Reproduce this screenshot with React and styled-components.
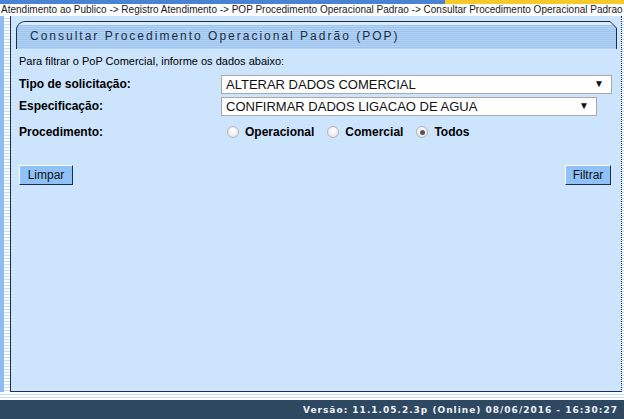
import styled, { createGlobalStyle } from "styled-components";

const Global = createGlobalStyle`
	html, body {
		margin: 0;
		padding: 0;
		background: #ffffff;
	}
	body {
		font-family: "Liberation Sans", Arial, sans-serif;
		color: #000;
	}
`;

const Page = styled.div`
	display: flex;
	flex-direction: column;
	width: 624px;
	height: 419px;
	overflow: hidden;
`;

const TopBar = styled.div`
	display: flex;
	height: 4px;
	flex-shrink: 0;
`;

const TopSegment = styled.div`
	flex: ${(p) => p.$grow};
	background: ${(p) => p.$color};
`;

const Breadcrumb = styled.div`
	height: 12px;
	line-height: 11px;
	font-size: 10px;
	color: #1a1a1a;
	white-space: nowrap;
	overflow: hidden;
	padding-left: 1px;
	flex-shrink: 0;
`;

const Main = styled.div`
	flex: 1;
	display: flex;
	min-height: 0;
`;

const SideBlue = styled.div`
	width: 4px;
	background: #8cbcf0;
`;

const SideStripes = styled.div`
	width: 6px;
	background: repeating-linear-gradient(
		to bottom,
		#ffffff 0px,
		#ffffff 2px,
		#c4dcf4 2px,
		#c4dcf4 3px
	);
	border-right: 1px solid #1e2f44;
`;

const Content = styled.div`
	flex: 1;
	background: #cce4fc;
	border-right: 1px dotted #2a3c55;
	border-bottom: 1px solid #1e2f44;
	padding: 5px 4px 0 5px;
	display: flex;
	flex-direction: column;
`;

const SideRight = styled.div`
	width: 2px;
	background: repeating-linear-gradient(
		to bottom,
		#ffffff 0px,
		#ffffff 2px,
		#c4dcf4 2px,
		#c4dcf4 3px
	);
`;

const TabOuter = styled.div`
	height: 26px;
	background: #1e2f44;
	border-top-left-radius: 9px;
	clip-path: polygon(0 0, calc(100% - 7px) 0, 100% 7px, 100% 100%, 0 100%);
	padding: 1px;
`;

const TabInner = styled.div`
	height: 100%;
	border-top-left-radius: 8px;
	clip-path: polygon(0 0, calc(100% - 6px) 0, 100% 6px, 100% 100%, 0 100%);
	background:
		linear-gradient(to bottom, #dcecfc 0px, #dcecfc 3px, transparent 3px),
		repeating-linear-gradient(
			to bottom,
			#b4d4f6 0px,
			#b4d4f6 1px,
			#9cc4ee 1px,
			#9cc4ee 2px
		);
	display: flex;
	align-items: center;
	padding-left: 13px;
	padding-top: 1px;
	font-size: 12px;
	letter-spacing: 2px;
	color: #1c2c40;
`;

const Form = styled.div`
	padding: 5px 0 0 3px;
	display: flex;
	flex-direction: column;
`;

const Intro = styled.div`
	font-size: 11px;
	height: 14px;
	line-height: 14px;
	margin-bottom: 5px;
`;

const Row = styled.div`
	display: grid;
	grid-template-columns: 202px 1fr;
	align-items: center;
	height: ${(p) => p.$h || 22}px;
	padding-top: ${(p) => p.$pt || 0}px;
`;

const Label = styled.div`
	font-size: 12px;
	font-weight: bold;
`;

const SelectBox = styled.div`
	width: ${(p) => p.$w}px;
	height: 19px;
	box-sizing: border-box;
	background: #ffffff;
	border: 1px solid #a8a8a8;
	display: flex;
	align-items: center;
	justify-content: space-between;
	padding: 0 7px 0 4px;
	font-size: 13px;
	color: #111;
`;

const Arrow = styled.span`
	font-size: 10px;
	line-height: 1;
`;

const Radios = styled.div`
	display: flex;
	align-items: center;
	padding-left: 6px;
`;

const RadioItem = styled.label`
	display: flex;
	align-items: center;
	font-size: 12px;
	font-weight: bold;
	margin-right: 13px;
`;

const RadioDot = styled.span`
	width: 12px;
	height: 12px;
	box-sizing: border-box;
	border-radius: 50%;
	border: 1px solid #b4b4b4;
	background: radial-gradient(circle at 50% 35%, #ffffff 0%, #e2e2e2 100%);
	margin-right: 6px;
	display: flex;
	align-items: center;
	justify-content: center;

	&::after {
		content: "";
		width: 5px;
		height: 5px;
		border-radius: 50%;
		background: ${(p) => (p.$checked ? "#555" : "transparent")};
	}
`;

const Buttons = styled.div`
	display: flex;
	justify-content: space-between;
	margin-top: 19px;
	padding-right: 6px;
`;

const Button = styled.button`
	font-family: "Liberation Sans", Arial, sans-serif;
	font-size: 12px;
	height: 20px;
	padding: 0 5px;
	background: #8ec2f8;
	color: #111;
	border: 1px solid;
	border-color: #ffffff #1e2f44 #1e2f44 #ffffff;
	min-width: ${(p) => p.$w}px;
	cursor: pointer;
`;

const BottomStripes = styled.div`
	height: 8px;
	flex-shrink: 0;
	background: repeating-linear-gradient(
		to bottom,
		#ffffff 0px,
		#ffffff 2px,
		#c4dcf4 2px,
		#c4dcf4 3px
	);
`;

const Footer = styled.div`
	height: 19px;
	flex-shrink: 0;
	background: #2f4862;
	color: #eef2f6;
	font-family: "DejaVu Sans", Verdana, sans-serif;
	font-weight: bold;
	font-size: 9px;
	letter-spacing: 1px;
	display: flex;
	align-items: center;
	justify-content: flex-end;
	padding-right: 6px;
`;

const tipos = ["Operacional", "Comercial", "Todos"];

function App() {
	return (
		<>
			<Global />
			<Page>
				<TopBar>
					<TopSegment $grow={445} $color="#4a82d4" />
					<TopSegment $grow={179} $color="#f6c828" />
				</TopBar>
				<Breadcrumb>
					Atendimento ao Publico -&gt; Registro Atendimento -&gt; POP
					Procedimento Operacional Padrao -&gt; Consultar Procedimento
					Operacional Padrao
				</Breadcrumb>
				<Main>
					<SideBlue />
					<SideStripes />
					<Content>
						<TabOuter>
							<TabInner>Consultar Procedimento Operacional Padrão (POP)</TabInner>
						</TabOuter>
						<Form>
							<Intro>Para filtrar o PoP Comercial, informe os dados abaixo:</Intro>
							<Row>
								<Label>Tipo de solicitação:</Label>
								<SelectBox $w={391}>
									ALTERAR DADOS COMERCIAL
									<Arrow>▼</Arrow>
								</SelectBox>
							</Row>
							<Row>
								<Label>Especificação:</Label>
								<SelectBox $w={376}>
									CONFIRMAR DADOS LIGACAO DE AGUA
									<Arrow>▼</Arrow>
								</SelectBox>
							</Row>
							<Row $h={28} $pt={1}>
								<Label>Procedimento:</Label>
								<Radios>
									{tipos.map((t) => (
										<RadioItem key={t}>
											<RadioDot $checked={t === "Todos"} />
											{t}
										</RadioItem>
									))}
								</Radios>
							</Row>
							<Buttons>
								<Button $w={54}>Limpar</Button>
								<Button $w={46}>Filtrar</Button>
							</Buttons>
						</Form>
					</Content>
					<SideRight />
				</Main>
				<BottomStripes />
				<Footer>Versão: 11.1.05.2.3p (Online) 08/06/2016 - 16:30:27</Footer>
			</Page>
		</>
	);
}

export default App;
